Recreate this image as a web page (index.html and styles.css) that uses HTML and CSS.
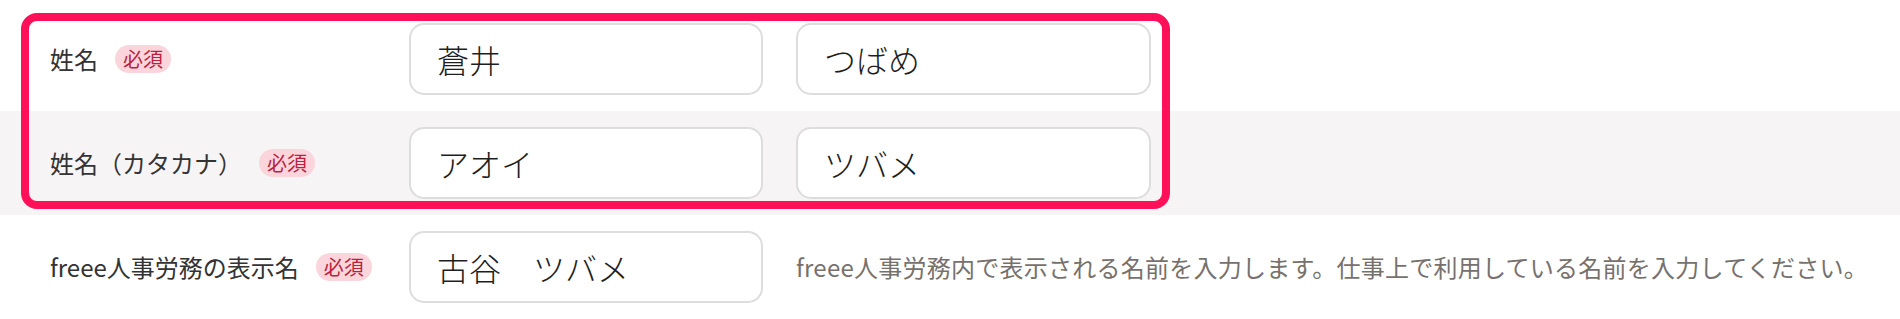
FILE: index.html
```html
<!DOCTYPE html>
<html lang="ja">
<head>
<meta charset="utf-8">
<title>姓名</title>
<link rel="stylesheet" href="styles.css">
</head>
<body>
<div class="form">
  <div class="row">
    <div class="label"><span class="label-text">姓名</span><span class="badge">必須</span></div>
    <div class="fields">
      <input class="field" type="text" value="蒼井" readonly>
      <input class="field field-wide" type="text" value="つばめ" readonly>
    </div>
  </div>
  <div class="row row-alt">
    <div class="label"><span class="label-text">姓名（カタカナ）</span><span class="badge">必須</span></div>
    <div class="fields">
      <input class="field" type="text" value="アオイ" readonly>
      <input class="field field-wide" type="text" value="ツバメ" readonly>
    </div>
  </div>
  <div class="row">
    <div class="label"><span class="label-text">freee人事労務の表示名</span><span class="badge">必須</span></div>
    <div class="fields">
      <input class="field" type="text" value="古谷　ツバメ" readonly>
      <p class="hint">freee人事労務内で表示される名前を入力します。仕事上で利用している名前を入力してください。</p>
    </div>
  </div>
  <div class="highlight"></div>
</div>
</body>
</html>
```

FILE: styles.css
```css
* { box-sizing: border-box; }

html, body {
  margin: 0;
  padding: 0;
  background: #ffffff;
}

body {
  font-family: "Noto Sans CJK JP", "Noto Sans", sans-serif;
  color: #333333;
  padding-top: 7px;
  overflow: hidden;
}

.form {
  position: relative;
}

.row {
  display: flex;
  align-items: center;
  height: 104px;
}

.row-alt {
  background: #f6f4f4;
}

.label {
  width: 409px;
  flex: none;
  padding-left: 50px;
  display: flex;
  align-items: center;
  gap: 17px;
}

.label-text {
  font-size: 24px;
  line-height: 32px;
  color: #333333;
}

.badge {
  display: inline-block;
  font-size: 20px;
  line-height: 28px;
  height: 28px;
  padding: 0 8px;
  border-radius: 14px;
  background: #fbd5dc;
  color: #b8233e;
}

.fields {
  display: flex;
  align-items: center;
  gap: 33px;
}

.field {
  width: 354px;
  height: 72px;
  border: 2px solid #dddddd;
  border-radius: 15px;
  background: #ffffff;
  padding: 0 26px;
  font-family: "Noto Sans CJK JP", "Noto Sans", sans-serif;
  font-size: 32px;
  font-weight: 300;
  color: #1e1e1e;
  outline: none;
  margin: 0;
}

.field-wide {
  width: 355px;
}

.hint {
  margin: 0;
  font-size: 24px;
  line-height: 32px;
  letter-spacing: 0.25px;
  color: #77716d;
  white-space: nowrap;
}

.highlight {
  position: absolute;
  top: 6px;
  left: 21px;
  width: 1149px;
  height: 196px;
  border: 8px solid #ff1058;
  border-radius: 16px;
  pointer-events: none;
}
```
